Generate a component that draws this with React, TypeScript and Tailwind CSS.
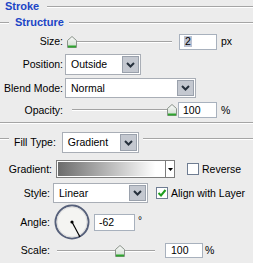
import React from "react";

function Chevron() {
  return (
    <svg width="9" height="6" viewBox="0 0 9 6">
      <path d="M1 1 L4.5 4.5 L8 1" stroke="#26303c" strokeWidth="2" fill="none" />
    </svg>
  );
}

function Select({ value, className }: { value: string; className: string }) {
  return (
    <div className={"flex items-stretch bg-white border border-[#a9aeb6] " + className}>
      <div className="flex-1 flex items-center pl-[5px] text-[10.5px]">{value}</div>
      <div className="w-[17px] m-[1px] bg-[#c4c8d0] border border-[#9aa1ac] flex items-center justify-center">
        <Chevron />
      </div>
    </div>
  );
}

function Input({ children, className }: { children: React.ReactNode; className: string }) {
  return (
    <div className={"bg-white border border-[#a8b1bd] flex items-center pl-[4px] text-[10.5px] " + className}>
      {children}
    </div>
  );
}

function Thumb() {
  return (
    <svg width="10" height="12" viewBox="0 0 10 12">
      <defs>
        <linearGradient id="tg" x1="0" y1="0" x2="0" y2="1">
          <stop offset="0" stopColor="#fafafa" />
          <stop offset="1" stopColor="#cfdccf" />
        </linearGradient>
      </defs>
      <path d="M0.5 4.5 L5 0.5 L9.5 4.5 L9.5 11.5 L0.5 11.5 Z" fill="url(#tg)" stroke="#8a948a" />
      <path d="M1 10.5 L9 10.5" stroke="#2ea52e" strokeWidth="2" />
    </svg>
  );
}

function Slider({ className, thumbLeft, trackL, trackR }: { className: string; thumbLeft: number; trackL: number; trackR: number }) {
  return (
    <div className={"relative h-full " + className}>
      <div
        className="absolute top-1/2 -translate-y-1/2 h-[2px] border-t border-[#a3a3a3] border-b border-b-white"
        style={{ left: trackL, right: trackR }}
      />
      <div className="absolute top-1/2 -translate-y-1/2 flex" style={{ left: thumbLeft }}>
        <Thumb />
      </div>
    </div>
  );
}

function Checkbox({ checked }: { checked?: boolean }) {
  return (
    <div className="w-[12px] h-[12px] bg-white border border-[#6f7d92] flex items-center justify-center">
      {checked && (
        <svg width="10" height="10" viewBox="0 0 10 10">
          <path d="M1.5 5 L4 7.5 L8.5 2" stroke="#1f9e1f" strokeWidth="2" fill="none" />
        </svg>
      )}
    </div>
  );
}

function Etched({ className }: { className: string }) {
  return <div className={"h-[2px] border-t border-[#a5a5a5] border-b border-b-white " + className} />;
}

export default function App() {
  return (
    <div className="w-[253px] h-[263px] bg-[#ececec] overflow-hidden [font-family:'Liberation_Sans',Arial,sans-serif] text-[10.5px] text-black leading-none">
      {/* Stroke header */}
      <div className="flex items-center h-[13px]">
        <span className="ml-[5px] text-[11px] font-bold text-[#1b45c6]">Stroke</span>
        <Etched className="ml-[8px] flex-1" />
      </div>

      {/* Structure legend */}
      <div className="flex items-center h-[13px] mt-[3px]">
        <Etched className="w-[9px]" />
        <span className="ml-[6px] text-[11px] font-bold text-[#1b45c6]">Structure</span>
        <Etched className="ml-[5px] flex-1" />
      </div>

      {/* Size */}
      <div className="flex items-center h-[17px] mt-[4px]">
        <div className="w-[63px] text-right">Size:</div>
        <Slider className="ml-[4px] w-[105px]" thumbLeft={0} trackL={2} trackR={0} />
        <Input className="ml-[7px] w-[38px] h-[16px] pl-[4px]">
          <span className="bg-[#bcc2d2] px-[1px]">2</span>
        </Input>
        <span className="ml-[4px]">px</span>
      </div>

      {/* Position */}
      <div className="flex items-center h-[21px] mt-[4px]">
        <div className="w-[63px] text-right">Position:</div>
        <Select value="Outside" className="ml-[2px] w-[76px] h-[21px]" />
      </div>

      {/* Blend Mode */}
      <div className="flex items-center h-[20px] mt-[3px]">
        <div className="w-[63px] text-right">Blend Mode:</div>
        <Select value="Normal" className="ml-[2px] w-[131px] h-[20px]" />
      </div>

      {/* Opacity */}
      <div className="flex items-center h-[16px] mt-[4px]">
        <div className="w-[63px] text-right">Opacity:</div>
        <Slider className="ml-[7px] w-[106px]" thumbLeft={97} trackL={2} trackR={6} />
        <Input className="ml-[2px] w-[39px] h-[16px]">100</Input>
        <span className="ml-[4px]">%</span>
      </div>

      <Etched className="mt-[4px] w-full" />

      {/* Fill Type */}
      <div className="flex items-center h-[21px] mt-[8px]">
        <Etched className="w-[9px] self-start mt-[6px]" />
        <span className="ml-[5px]">Fill Type:</span>
        <Select value="Gradient" className="ml-[6px] w-[77px] h-[21px]" />
        <Etched className="ml-[4px] flex-1 self-start mt-[6px]" />
      </div>

      {/* Gradient */}
      <div className="flex items-center h-[18px] mt-[7px]">
        <div className="w-[52px] text-right">Gradient:</div>
        <div className="ml-[4px] w-[119px] h-[18px] flex border border-[#7c7c7c] bg-white">
          <div className="flex-1 m-[1px] bg-[linear-gradient(to_right,#6c6c6c,#ffffff_92%)]" />
          <div className="w-[9px] border-l border-[#7c7c7c] flex items-center justify-center">
            <svg width="5" height="3" viewBox="0 0 5 3">
              <path d="M0 0 L5 0 L2.5 3 Z" fill="#000" />
            </svg>
          </div>
        </div>
        <div className="ml-[12px]">
          <Checkbox />
        </div>
        <span className="ml-[3px]">Reverse</span>
      </div>

      {/* Style */}
      <div className="flex items-center h-[20px] mt-[5px]">
        <div className="w-[50px] text-right">Style:</div>
        <Select value="Linear" className="ml-[3px] w-[95px] h-[20px]" />
        <div className="ml-[8px]">
          <Checkbox checked />
        </div>
        <span className="ml-[3px]">Align with Layer</span>
      </div>

      {/* Angle */}
      <div className="flex items-center h-[36px] mt-[1px]">
        <div className="w-[50px] text-right">Angle:</div>
        <div className="ml-[4px] w-[36px] h-[36px]">
          <svg width="36" height="36" viewBox="0 0 36 36">
            <circle cx="18" cy="18" r="16.5" fill="#f4f4f2" stroke="#56607a" strokeWidth="2" />
            <circle cx="18" cy="18" r="15" fill="none" stroke="#dcdcdc" strokeWidth="1" />
            <line x1="18" y1="18" x2="26" y2="33" stroke="#000" strokeWidth="1.2" />
            <circle cx="18" cy="18" r="1.6" fill="#000" />
          </svg>
        </div>
        <Input className="ml-[4px] w-[41px] h-[17px]">-62</Input>
        <span className="ml-[3px] self-start mt-[12px] text-[10px]">°</span>
      </div>

      {/* Scale */}
      <div className="flex items-center h-[15px] mt-[3px]">
        <div className="w-[50px] text-right">Scale:</div>
        <Slider className="ml-[5px] w-[102px]" thumbLeft={60} trackL={2} trackR={2} />
        <Input className="ml-[8px] w-[38px] h-[15px] pl-[5px]">100</Input>
        <span className="ml-[2px]">%</span>
      </div>
    </div>
  );
}
